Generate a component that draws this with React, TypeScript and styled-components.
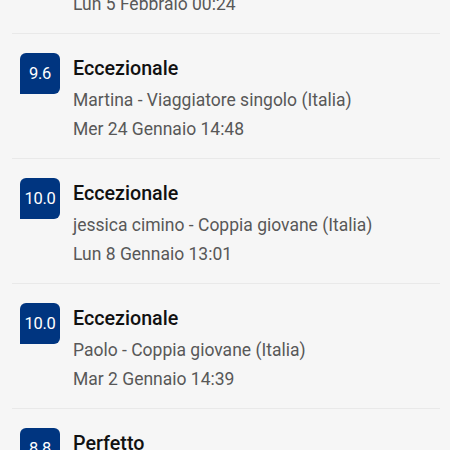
import React from 'react'
import styled, { createGlobalStyle } from 'styled-components'

const GlobalStyle = createGlobalStyle`
  html, body {
    margin: 0;
    padding: 0;
    background: #f6f6f6;
    font-family: Roboto, 'Noto Sans', Arial, sans-serif;
  }
`

const Screen = styled.div`
  width: 450px;
  height: 450px;
  overflow: hidden;
  background: #f6f6f6;
`

// list is scrolled so the first review shows only its last line
const ReviewList = styled.ul`
  list-style: none;
  margin: -91px 0 0;
  padding: 0;
`

const ReviewRow = styled.li`
  display: flex;
  align-items: flex-start;
  gap: 13px;
  height: 125px;
  margin: 0 10px 0 12px;
  padding: 19px 0 0 8px;
  box-sizing: border-box;
  border-bottom: 1px solid #e9e9e9;
`

const ScoreBadge = styled.div`
  flex: 0 0 40px;
  width: 40px;
  height: 41px;
  display: flex;
  align-items: center;
  justify-content: center;
  background: #003580;
  color: #ffffff;
  font-size: 16.5px;
  border-radius: 6px 6px 6px 0;
  letter-spacing: -0.3px;
`

const Body = styled.div`
  display: flex;
  flex-direction: column;
  padding-top: 4px;
`

const Verdict = styled.div`
  font-size: 19.7px;
  line-height: 24px;
  font-weight: 500;
  color: #111111;
`

const Meta = styled.div`
  font-size: 17.5px;
  line-height: 29px;
  color: #585858;
`

const Author = styled(Meta)`
  margin-top: 5px;
`

type Review = {
  score: string
  verdict: string
  author: string
  date: string
}

const reviews: Review[] = [
  { score: '9.2', verdict: 'Eccezionale', author: 'Giulia - Coppia giovane (Italia)', date: 'Lun 5 Febbraio 00:24' },
  { score: '9.6', verdict: 'Eccezionale', author: 'Martina - Viaggiatore singolo (Italia)', date: 'Mer 24 Gennaio 14:48' },
  { score: '10.0', verdict: 'Eccezionale', author: 'jessica cimino - Coppia giovane (Italia)', date: 'Lun 8 Gennaio 13:01' },
  { score: '10.0', verdict: 'Eccezionale', author: 'Paolo - Coppia giovane (Italia)', date: 'Mar 2 Gennaio 14:39' },
  { score: '8.8', verdict: 'Perfetto', author: 'Luca - Famiglia (Italia)', date: 'Dom 31 Dicembre 10:12' },
]

const App = () => (
  <Screen>
    <GlobalStyle />
    <ReviewList>
      {reviews.map((review, i) => (
        <ReviewRow key={i}>
          <ScoreBadge>{review.score}</ScoreBadge>
          <Body>
            <Verdict>{review.verdict}</Verdict>
            <Author>{review.author}</Author>
            <Meta>{review.date}</Meta>
          </Body>
        </ReviewRow>
      ))}
    </ReviewList>
  </Screen>
)

export default App
